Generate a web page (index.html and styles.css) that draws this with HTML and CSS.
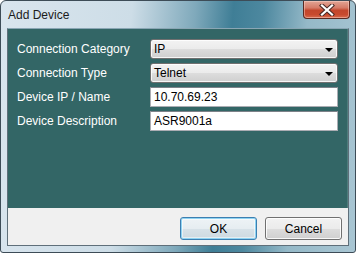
FILE: index.html
```html
<!DOCTYPE html>
<html>
<head>
<meta charset="utf-8">
<link rel="stylesheet" href="styles.css">
</head>
<body>
<div class="window">
  <div class="titlebar">
    <span class="title">Add Device</span>
    <div class="close">
      <svg width="18" height="12" viewBox="0 0 18 12">
        <path d="M4 1.5 L14 10.5 M14 1.5 L4 10.5" stroke="#4a2a26" stroke-width="4.2" stroke-linecap="square"/>
        <path d="M4 1.5 L14 10.5 M14 1.5 L4 10.5" stroke="#ffffff" stroke-width="2.2" stroke-linecap="square"/>
      </svg>
    </div>
  </div>
  <div class="client">
    <div class="panel">
      <div class="form">
        <label class="label">Connection Category</label>
        <div class="combo"><span>IP</span><span class="arrow"></span></div>
        <label class="label">Connection Type</label>
        <div class="combo"><span>Telnet</span><span class="arrow"></span></div>
        <label class="label">Device IP / Name</label>
        <div class="input">10.70.69.23</div>
        <label class="label">Device Description</label>
        <div class="input">ASR9001a</div>
      </div>
    </div>
    <div class="footer">
      <div class="btn default">OK</div>
      <div class="btn">Cancel</div>
    </div>
  </div>
</div>
</body>
</html>
```
FILE: styles.css
```css
html, body {
  margin: 0;
  padding: 0;
  background: #ffffff;
}
body {
  font-family: "Liberation Sans", Arial, sans-serif;
  font-size: 12px;
}
.window {
  width: 356px;
  height: 253px;
  box-sizing: border-box;
  border: 1px solid #3d4c57;
  border-radius: 6px 6px 3px 3px;
  background: linear-gradient(95deg, #d9e5ee 0%, #cddde7 35%, #7fa9bb 52%, #3f7e96 62%, #4d889f 70%, #95b9c8 82%, #a9c6d3 100%);
  display: flex;
  flex-direction: column;
  padding: 0 6px 6px 6px;
  overflow: hidden;
}
.titlebar {
  height: 27px;
  display: flex;
  justify-content: space-between;
  align-items: flex-start;
  margin-right: -1px;
}
.title {
  padding-top: 7px;
  padding-left: 1px;
  color: #1b1b1b;
  font-size: 12px;
}
.close {
  width: 47px;
  height: 18px;
  box-sizing: border-box;
  border: 1px solid #5a2a22;
  border-top: none;
  border-radius: 0 0 4px 4px;
  background: linear-gradient(#e2a595 0%, #d57b68 40%, #c3462c 55%, #c84a2e 80%, #d86c4f 100%);
  display: flex;
  align-items: center;
  justify-content: center;
  box-shadow: inset 0 0 0 1px rgba(255,220,210,0.45);
}
.close svg {
  display: block;
}
.client {
  flex: 1;
  display: flex;
  flex-direction: column;
  border: 1px solid #5f6f7a;
  border-top-color: #8aa6b4;
  background: #f0f0f0;
}
.panel {
  height: 179px;
  box-sizing: border-box;
  background: #336666;
  border-right: 1px solid #4e7c7c;
  padding: 10px 0 0 9px;
}
.form {
  display: grid;
  grid-template-columns: 133px 188px;
  grid-auto-rows: 20px;
  row-gap: 4px;
}
.label {
  color: #ffffff;
  display: flex;
  align-items: center;
  font-size: 12px;
}
.combo {
  box-sizing: border-box;
  border: 1px solid #707070;
  border-radius: 3px;
  background: linear-gradient(#f3f3f3 0%, #ebebeb 50%, #dddddd 51%, #cfcfcf 100%);
  box-shadow: inset 0 0 0 1px rgba(255,255,255,0.8);
  display: flex;
  align-items: center;
  justify-content: space-between;
  padding: 0 4px 0 3px;
  color: #000000;
}
.arrow {
  width: 0;
  height: 0;
  border-left: 4px solid transparent;
  border-right: 4px solid transparent;
  border-top: 4px solid #000000;
  margin-top: 2px;
}
.input {
  box-sizing: border-box;
  border: 1px solid #abadb3;
  border-top-color: #7d8289;
  background: #ffffff;
  display: flex;
  align-items: center;
  padding: 0 3px;
  color: #000000;
}
.footer {
  flex: 1;
  display: flex;
  justify-content: flex-end;
  align-items: flex-start;
  gap: 8px;
  padding: 9px 6px 0 0;
}
.btn {
  width: 77px;
  height: 23px;
  box-sizing: border-box;
  border: 1px solid #707070;
  border-radius: 3px;
  background: linear-gradient(#f2f2f2 0%, #ebebeb 50%, #dddddd 51%, #cfcfcf 100%);
  box-shadow: inset 0 0 0 1px rgba(255,255,255,0.85);
  display: flex;
  align-items: center;
  justify-content: center;
  color: #000000;
  font-size: 12px;
}
.btn.default {
  border-color: #3c7fb1;
  box-shadow: inset 0 0 0 1px #8fd3f2, inset 0 0 0 2px rgba(255,255,255,0.5);
  background: linear-gradient(#eef3f6 0%, #e6edf1 50%, #d8e2e8 51%, #cdd9e0 100%);
}
```
